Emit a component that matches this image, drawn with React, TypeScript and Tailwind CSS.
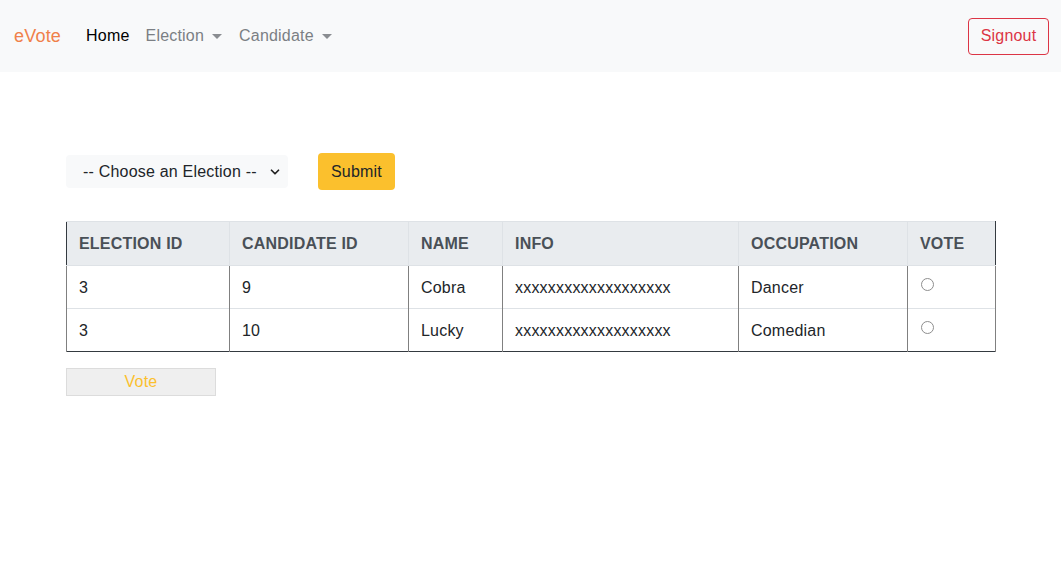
import { ChevronDown } from 'lucide-react';

const COLS = [
  { label: 'Election ID', w: 'w-[163px]' },
  { label: 'Candidate ID', w: 'w-[179px]' },
  { label: 'Name', w: 'w-[94px]' },
  { label: 'Info', w: 'w-[236px]' },
  { label: 'Occupation', w: 'w-[169px]' },
  { label: 'Vote', w: 'w-[88px]' },
];

const ROWS = [
  { election: '3', candidate: '9', name: 'Cobra', info: 'xxxxxxxxxxxxxxxxxxx', occupation: 'Dancer' },
  { election: '3', candidate: '10', name: 'Lucky', info: 'xxxxxxxxxxxxxxxxxxx', occupation: 'Comedian' },
];

function Caret() {
  return (
    <span className="ml-[8px] inline-block h-0 w-0 border-x-[5px] border-t-[5px] border-x-transparent border-t-[#8a8d91] align-middle" />
  );
}

export default function App() {
  return (
    <div className="min-h-[563px] bg-white font-['Liberation_Sans',Arial,sans-serif] text-[16px] tracking-[0.2px] text-[#212529]">
      <nav className="flex h-[72px] items-center bg-[#f8f9fa] pl-[14px] pr-[12px]">
        <span className="mr-[25px] text-[18px] text-[#f0804a]">eVote</span>
        <span className="mr-[16px] text-black">Home</span>
        <span className="mr-[17px] flex items-center text-[#7b7f84]">
          Election
          <Caret />
        </span>
        <span className="flex items-center text-[#7b7f84]">
          Candidate
          <Caret />
        </span>
        <button className="ml-auto h-[37px] w-[81px] rounded-[4px] border border-[#dc3545] text-[#dc3545]">
          Signout
        </button>
      </nav>

      <main className="px-[66px] pt-[81px]">
        <div className="flex items-center gap-[30px]">
          <div className="flex h-[33px] w-[222px] items-center justify-between rounded-[4px] bg-[#f8f9fa] pl-[17px] pr-[6px]">
            <span>-- Choose an Election --</span>
            <ChevronDown size={14} strokeWidth={3} className="text-[#222]" />
          </div>
          <button className="h-[37px] w-[77px] rounded-[4px] bg-[#fbc02d] text-[#212529]">Submit</button>
        </div>

        <table className="mt-[31px] w-[929px] table-fixed border-collapse border border-t-0 border-[#343a40]">
          <thead>
            <tr className="h-[44px] bg-[#e9ecef]">
              {COLS.map((c) => (
                <th
                  key={c.label}
                  className={`${c.w} border border-[#dee2e6] px-[12px] text-left font-bold uppercase text-[#495057] first:border-l-[#343a40] last:border-r-[#343a40]`}
                >
                  {c.label}
                </th>
              ))}
            </tr>
          </thead>
          <tbody>
            {ROWS.map((r, i) => (
              <tr key={i} className="h-[43px]">
                <td className="border-x border-t border-x-[#808080] border-t-[#dee2e6] px-[12px] pt-[2px]">{r.election}</td>
                <td className="border-x border-t border-x-[#808080] border-t-[#dee2e6] px-[12px] pt-[2px]">{r.candidate}</td>
                <td className="border-x border-t border-x-[#808080] border-t-[#dee2e6] px-[12px] pt-[2px]">{r.name}</td>
                <td className="border-x border-t border-x-[#808080] border-t-[#dee2e6] px-[12px] pt-[2px]">{r.info}</td>
                <td className="border-x border-t border-x-[#808080] border-t-[#dee2e6] px-[12px] pt-[2px]">{r.occupation}</td>
                <td className="border-x border-t border-x-[#808080] border-t-[#dee2e6] px-[12px] align-top">
                  <span className="mt-[12px] ml-[1px] block h-[13px] w-[13px] rounded-full border border-[#8e8e8e] bg-white" />
                </td>
              </tr>
            ))}
          </tbody>
        </table>

        <button className="mt-[16px] h-[28px] w-[150px] border border-[#dcdcdc] bg-[#efefef] text-[#fbc02d]">Vote</button>
      </main>
    </div>
  );
}
